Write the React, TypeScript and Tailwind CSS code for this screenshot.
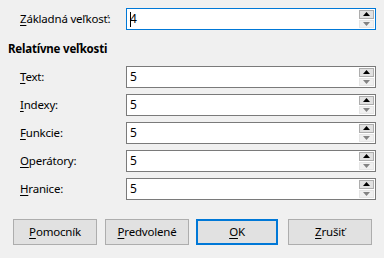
import React from 'react';

const rows = [
  { key: 'T', rest: 'ext:', value: '5' },
  { key: 'I', rest: 'ndexy:', value: '5' },
  { key: 'F', rest: 'unkcie:', value: '5' },
  { key: 'O', rest: 'perátory:', value: '5' },
  { key: 'H', rest: 'ranice:', value: '5' },
];

function Spin({ focused, value }: { focused?: boolean; value: string }) {
  return (
    <div
      className={`flex h-[22px] w-[250px] items-stretch bg-white border ${
        focused ? 'border-[#0078d7]' : 'border-[#7a7a7a]'
      }`}
    >
      <div className="flex flex-1 items-center pl-[3px] text-[12px] text-black">
        {focused && <span className="mr-[-1px] h-[15px] w-px bg-black" />}
        {value}
      </div>
      <div className="flex w-[16px] flex-col gap-px py-px pr-px">
        <div className="flex h-[9px] items-center justify-center border border-[#adadad] bg-[#e1e1e1]">
          <svg width="7" height="4" viewBox="0 0 7 4">
            <path d="M0 4 L3.5 0 L7 4 Z" fill="#000" />
          </svg>
        </div>
        <div className="flex h-[9px] items-center justify-center border border-[#e5e5e5] bg-[#f0f0f0]">
          <svg width="7" height="4" viewBox="0 0 7 4">
            <path d="M0 0 L7 0 L3.5 4 Z" fill="#838383" />
          </svg>
        </div>
      </div>
    </div>
  );
}

function Btn({ k, rest, def }: { k: string; rest: string; def?: boolean }) {
  return (
    <button
      className={`flex h-[26px] items-center justify-center bg-[#e1e1e1] text-black ${
        def ? 'w-[82px] border-2 border-[#0078d7]' : 'w-[84px] border border-[#adadad]'
      }`}
    >
      <span className="underline underline-offset-2">{k}</span>
      {rest}
    </button>
  );
}

export default function App() {
  return (
    <div
      className="flex h-[258px] w-[384px] flex-col bg-[#f0f0f0] text-[11.5px] tracking-[-0.2px] text-black"
      style={{ fontFamily: '"Noto Sans", "Segoe UI", sans-serif' }}
    >
      {/* Base size */}
      <div className="mt-[8px] flex items-center pl-[20px]">
        <span className="w-[106px]">
          <span className="underline underline-offset-2">Z</span>ákladná veľkosť:
        </span>
        <Spin focused value="4" />
      </div>

      <div className="mt-[11px] pl-[8px] font-bold leading-[16px]">Relatívne veľkosti</div>

      <div className="mt-[9px] flex flex-col gap-[6px]">
        {rows.map((r) => (
          <div key={r.key} className="flex items-center pl-[20px]">
            <span className="w-[106px]">
              <span className="underline underline-offset-2">{r.key}</span>
              {r.rest}
            </span>
            <Spin value={r.value} />
          </div>
        ))}
      </div>

      <div className="mt-[19px] flex items-center pl-[13px]">
        <Btn k="P" rest="omocník" />
        <div className="w-[8px]" />
        <Btn k="P" rest="redvolené" />
        <div className="w-[7px]" />
        <Btn k="O" rest="K" def />
        <div className="w-[10px]" />
        <Btn k="Z" rest="rušiť" />
      </div>
    </div>
  );
}
